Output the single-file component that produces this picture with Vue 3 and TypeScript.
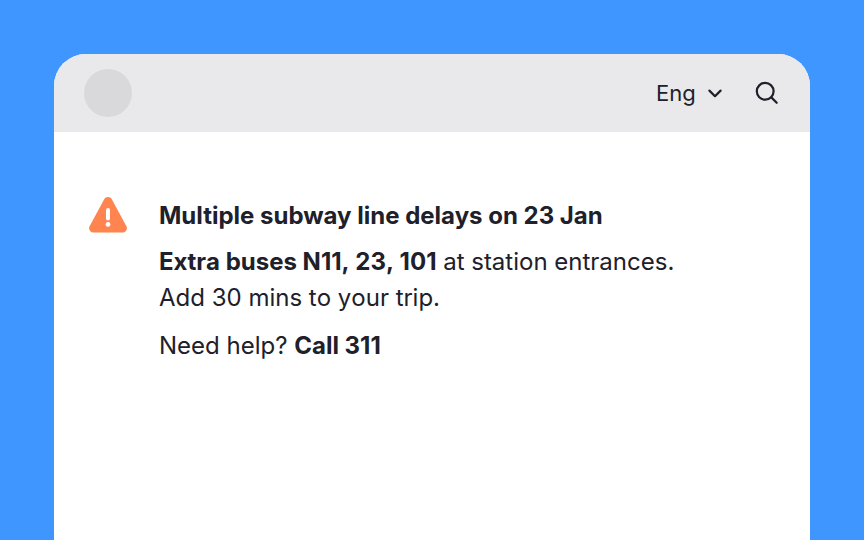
<script setup lang="ts">
import { ref } from 'vue'

const languages: string[] = ['Eng']
const language = ref<string>('Eng')
</script>

<template>
  <div class="page">
    <div class="screen">
      <header class="bar">
        <div class="avatar"></div>
        <div class="tools">
          <label class="language">
            <select v-model="language" aria-label="Language">
              <option v-for="item in languages" :key="item" :value="item">{{ item }}</option>
            </select>
            <svg class="chevron" viewBox="0 0 16 16" aria-hidden="true">
              <path d="M2.400 5.600 8 11.200l5.600-5.600" />
            </svg>
          </label>
          <button class="search" type="button" aria-label="Search">
            <svg viewBox="0 0 24 24" aria-hidden="true">
              <circle cx="10.200" cy="10.300" r="8.400" />
              <path d="m16.300 16.400 5.400 5.400" />
            </svg>
          </button>
        </div>
      </header>
      <main class="notice">
        <svg class="warning" viewBox="0 0 38 36" aria-hidden="true">
          <path
            class="triangle"
            d="M15.200 2.200a4.400 4.400 0 0 1 7.600 0l14.500 26.900c1.600 3-.3 6.500-3.700 6.500H4.400C1 35.600-.9 32.100.7 29.100z"
          />
          <rect x="17" y="11" width="4" height="12.400" rx="2" />
          <circle cx="19" cy="27.400" r="2.400" />
        </svg>
        <div class="message">
          <h1>Multiple subway line delays on 23 Jan</h1>
          <p><strong>Extra buses N11, 23, 101</strong> at station entrances.<br />Add 30 mins to your trip.</p>
          <p>Need help? <strong>Call 311</strong></p>
        </div>
      </main>
    </div>
  </div>
</template>

<style>
body {
  margin: 0;
  background: #4096ff;
}
</style>

<style scoped>
.page {
  box-sizing: border-box;
  display: flex;
  min-height: 100vh;
  padding: 54px 54px 0;
  background: #4096ff;
  color: #20202a;
  font-family: Inter, sans-serif;
}

.screen {
  flex: 1;
  overflow: hidden;
  border-radius: 32px 32px 0 0;
  background: #fff;
}

.bar {
  display: flex;
  align-items: center;
  justify-content: space-between;
  padding: 15px 31px 15px 30px;
  background: #e9e9eb;
}

.avatar {
  width: 48px;
  height: 48px;
  border-radius: 50%;
  background: #d9d9db;
}

.tools {
  display: flex;
  align-items: center;
  gap: 32px;
}

.language {
  display: flex;
  align-items: center;
  gap: 11px;
}

select {
  appearance: none;
  margin: 0;
  padding: 0;
  border: 0;
  background: none;
  color: inherit;
  font: 400 22px/32px Inter, sans-serif;
  cursor: pointer;
}

.chevron {
  width: 16px;
  height: 16px;
}

.search {
  display: flex;
  padding: 0;
  border: 0;
  background: none;
  color: inherit;
  cursor: pointer;
}

.search svg {
  width: 24px;
  height: 24px;
}

.chevron,
.search svg {
  fill: none;
  stroke: currentColor;
  stroke-width: 2.200;
  stroke-linecap: round;
  stroke-linejoin: round;
}

.notice {
  display: flex;
  align-items: flex-start;
  gap: 32px;
  padding: 65px 35px;
}

.warning {
  flex: none;
  width: 38px;
  height: 36px;
  fill: #fff;
}

.triangle {
  fill: #ff844f;
}

.message {
  font-size: 24px;
  line-height: 36px;
}

h1,
p {
  margin: 0;
  font-size: inherit;
}

h1 {
  margin-bottom: 9px;
  line-height: 38px;
}

p {
  font-kerning: none;
}

p + p {
  margin-top: 12px;
}

h1,
strong {
  font-weight: 700;
}
</style>
